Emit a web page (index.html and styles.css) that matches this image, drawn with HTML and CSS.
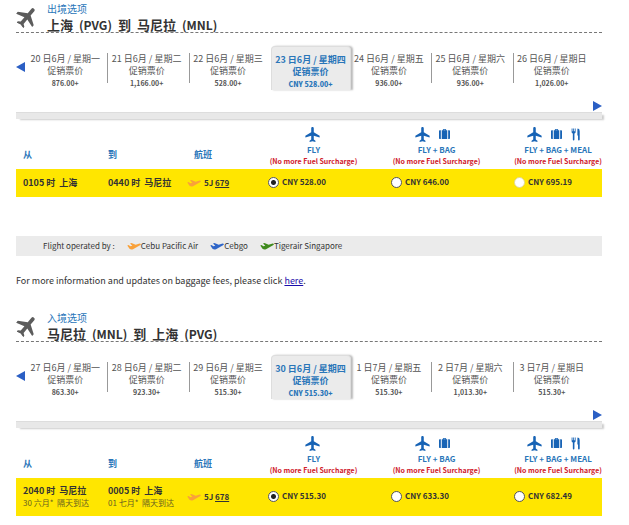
FILE: index.html
```html
<!DOCTYPE html>
<html lang="zh-CN">
<head>
    <meta charset="UTF-8">
    <meta name="viewport" content="width=device-width, initial-scale=1.0">
    <title>Select Flights</title>
    <link rel="stylesheet" href="styles.css">
</head>
<body>
    <!-- shared icons -->
    <svg class="sprite" width="0" height="0" aria-hidden="true">
        <symbol id="plane" viewBox="2 2 19 20">
            <path d="M21 16v-2.200l-7.800-4.900V3.700c0-1-0.770-1.700-1.700-1.700S9.800 2.700 9.800 3.700v5.200L2 13.800V16l7.800-2.400V18.800l-2.200 1.600V22l3.900-1.100 3.900 1.100v-1.600l-2.200-1.600v-5.200z"/>
        </symbol>
        <symbol id="bag" viewBox="0 0 12 12">
            <path d="M0.800 2H2v9.500H0.800Q0 11.500 0 10.700V2.800Q0 2 0.800 2zM10 2h1.200Q12 2 12 2.800v7.900q0 0.800-0.800 0.800H10zM3 2h1.200V1.200Q4.200 0.500 5 0.500h2Q7.800 0.500 7.800 1.200V2H9v9.500H3zM5.100 1.300V2h1.800v-0.700z"/>
        </symbol>
        <symbol id="meal" viewBox="0 0 10 14">
            <path d="M0.300 0.500h0.900v3h0.800v-3h0.900v3h0.800v-3h0.900v4q0 1-1.300 1.500v6.500q0 1-0.850 1t-0.850-1V6Q0.300 5.500 0.300 4.500zM7 0.500q2 0.300 2 3V12.500q0 1-0.900 1t-0.900-1V8H6.500V1.500q0-0.900 0.500-1z"/>
        </symbol>
        <symbol id="takeoff" viewBox="0 0 14 8">
            <path d="M0.300 3.400l1.200-0.300 1.900 1.200 1.900-0.500L3 1.400l1.500-0.300 4.200 1.700 3.100-1.100q1.600-0.400 2 0.200t-0.800 1.300L9.500 5.300 6 7.300Q4 8 2.500 6.800L0.300 3.400z"/>
        </symbol>
    </svg>

    <main class="page">
        <section class="trip">
            <header class="trip-header">
                <svg class="trip-icon"><use href="#plane"/></svg>
                <div>
                    <p class="trip-type">出境选项</p>
                    <h2><span>上海</span><span class="code">(PVG)</span><span>到</span><span>马尼拉</span><span class="code">(MNL)</span></h2>
                </div>
            </header>

            <div class="dates">
                <button class="arrow prev" aria-label="Previous"></button>
                <a class="date" href="#">20 日6月 / 星期一<br>促销票价<b>876.00+</b></a>
                <a class="date" href="#">21 日6月 / 星期二<br>促销票价<b>1,166.00+</b></a>
                <a class="date" href="#">22 日6月 / 星期三<br>促销票价<b>528.00+</b></a>
                <a class="date selected" href="#">23 日6月 / 星期四<br>促销票价<b>CNY 528.00+</b></a>
                <a class="date" href="#">24 日6月 / 星期五<br>促销票价<b>936.00+</b></a>
                <a class="date" href="#">25 日6月 / 星期六<br>促销票价<b>936.00+</b></a>
                <a class="date" href="#">26 日6月 / 星期日<br>促销票价<b>1,026.00+</b></a>
            </div>
            <div class="next-row"><button class="arrow next" aria-label="Next"></button></div>
            <div class="bar"></div>

            <table class="flights">
                <thead>
                    <tr>
                        <th class="place">从</th>
                        <th class="place">到</th>
                        <th class="number">航班</th>
                        <th class="fare">
                            <div class="icons"><svg class="i-plane"><use href="#plane"/></svg></div>
                            FLY<small>(No more Fuel Surcharge)</small>
                        </th>
                        <th class="fare">
                            <div class="icons many"><svg class="i-plane"><use href="#plane"/></svg><svg class="i-bag"><use href="#bag"/></svg></div>
                            FLY + BAG<small>(No more Fuel Surcharge)</small>
                        </th>
                        <th class="fare last">
                            <div class="icons many"><svg class="i-plane"><use href="#plane"/></svg><svg class="i-bag"><use href="#bag"/></svg><svg class="i-meal"><use href="#meal"/></svg></div>
                            FLY + BAG + MEAL<small>(No more Fuel Surcharge)</small>
                        </th>
                    </tr>
                </thead>
                <tbody>
                    <tr>
                        <td><b>0105 时&nbsp; 上海</b></td>
                        <td><b>0440 时&nbsp; 马尼拉</b></td>
                        <td class="flight-no"><svg class="i-air cebu"><use href="#takeoff"/></svg><span>5J <a href="#">679</a></span></td>
                        <td class="price"><label><input type="radio" name="out" checked>CNY 528.00</label></td>
                        <td class="price"><label><input type="radio" name="out">CNY 646.00</label></td>
                        <td class="price"><label><input type="radio" name="out" class="light">CNY 695.19</label></td>
                    </tr>
                </tbody>
            </table>
        </section>

        <div class="operators">
            <span class="operators-label">Flight operated by :</span>
            <span class="operator"><svg class="i-air cebu"><use href="#takeoff"/></svg>Cebu Pacific Air</span>
            <span class="operator"><svg class="i-air cebgo"><use href="#takeoff"/></svg>Cebgo</span>
            <span class="operator"><svg class="i-air tiger"><use href="#takeoff"/></svg>Tigerair Singapore</span>
        </div>

        <p class="info">For more information and updates on baggage fees, please click <a href="#">here</a>.</p>

        <section class="trip">
            <header class="trip-header">
                <svg class="trip-icon"><use href="#plane"/></svg>
                <div>
                    <p class="trip-type">入境选项</p>
                    <h2><span>马尼拉</span><span class="code">(MNL)</span><span>到</span><span>上海</span><span class="code">(PVG)</span></h2>
                </div>
            </header>

            <div class="dates">
                <button class="arrow prev" aria-label="Previous"></button>
                <a class="date" href="#">27 日6月 / 星期一<br>促销票价<b>863.30+</b></a>
                <a class="date" href="#">28 日6月 / 星期二<br>促销票价<b>923.30+</b></a>
                <a class="date" href="#">29 日6月 / 星期三<br>促销票价<b>515.30+</b></a>
                <a class="date selected" href="#">30 日6月 / 星期四<br>促销票价<b>CNY 515.30+</b></a>
                <a class="date" href="#">1 日7月 / 星期五<br>促销票价<b>515.30+</b></a>
                <a class="date" href="#">2 日7月 / 星期六<br>促销票价<b>1,013.30+</b></a>
                <a class="date" href="#">3 日7月 / 星期日<br>促销票价<b>515.30+</b></a>
            </div>
            <div class="next-row"><button class="arrow next" aria-label="Next"></button></div>
            <div class="bar"></div>

            <table class="flights">
                <thead>
                    <tr>
                        <th class="place">从</th>
                        <th class="place">到</th>
                        <th class="number">航班</th>
                        <th class="fare">
                            <div class="icons"><svg class="i-plane"><use href="#plane"/></svg></div>
                            FLY<small>(No more Fuel Surcharge)</small>
                        </th>
                        <th class="fare">
                            <div class="icons many"><svg class="i-plane"><use href="#plane"/></svg><svg class="i-bag"><use href="#bag"/></svg></div>
                            FLY + BAG<small>(No more Fuel Surcharge)</small>
                        </th>
                        <th class="fare last">
                            <div class="icons many"><svg class="i-plane"><use href="#plane"/></svg><svg class="i-bag"><use href="#bag"/></svg><svg class="i-meal"><use href="#meal"/></svg></div>
                            FLY + BAG + MEAL<small>(No more Fuel Surcharge)</small>
                        </th>
                    </tr>
                </thead>
                <tbody>
                    <tr>
                        <td><b>2040 时&nbsp; 马尼拉</b><span class="arrival">30 六月*&nbsp; 隔天到达</span></td>
                        <td><b>0005 时&nbsp; 上海</b><span class="arrival">01 七月*&nbsp; 隔天到达</span></td>
                        <td class="flight-no"><svg class="i-air cebu"><use href="#takeoff"/></svg><span>5J <a href="#">678</a></span></td>
                        <td class="price"><label><input type="radio" name="in" checked>CNY 515.30</label></td>
                        <td class="price"><label><input type="radio" name="in">CNY 633.30</label></td>
                        <td class="price"><label><input type="radio" name="in">CNY 682.49</label></td>
                    </tr>
                </tbody>
            </table>
        </section>
    </main>
</body>
</html>
```

FILE: styles.css
```css
* {
    box-sizing: border-box;
}
body {
    margin: 0;
    background-color: #fff;
    color: #333;
    font-family: "Noto Sans CJK SC", "Noto Sans", sans-serif;
    font-size: 9px;
    line-height: 12px;
}
.sprite {
    position: absolute;
}
svg {
    display: block;
    flex: none;
    fill: currentColor;
}
.page {
    padding: 3px 27px 0 16px;
}

/* heading */
.trip-header {
    display: flex;
    gap: 9px;
    height: 30px;
    border-bottom: 1px dashed #777;
}
.trip-icon {
    width: 22px;
    height: 22px;
    margin-top: 3px;
    color: #5c5c5c;
    transform: rotate(40deg);
}
.trip-type {
    margin: 0;
    color: #2a76b9;
    font-size: 10px;
}
h2 {
    display: flex;
    gap: 6px;
    margin: 2px 0 0;
    font-size: 13px;
    line-height: 16px;
}
.code {
    font-size: 12px;
}

/* date strip */
.dates {
    display: flex;
    margin: 13px 7px 0 0;
}
.arrow {
    width: 9px;
    height: 10px;
    padding: 0;
    border: 0;
    background-color: #2b5fc4;
    cursor: pointer;
}
.prev {
    margin: 16px 2px 0 0;
    clip-path: polygon(0 50%, 100% 0, 100% 100%);
}
.next {
    clip-path: polygon(0 0, 100% 50%, 0 100%);
}
.date {
    flex: 1 1 0;
    height: 30px;
    margin-top: 7px;
    padding-right: 4px;
    border-right: 1px solid #999;
    color: #555;
    text-align: center;
    text-decoration: none;
    white-space: nowrap;
}
.date:last-child,
.date:has(+ .selected) {
    border-right-color: transparent;
}
.date b {
    display: block;
    font-size: 7px;
}
.date.selected {
    height: 44px;
    margin-top: 0;
    padding: 7px 1px 0 0;
    border: 1px solid #ddd;
    border-bottom: 0;
    border-radius: 4px 4px 0 0;
    background-color: #ebebeb;
    box-shadow: 2px 0 2px #bbb;
    color: #2a76b9;
    font-weight: bold;
}
.next-row {
    display: flex;
    justify-content: flex-end;
    padding-top: 11px;
}
.bar {
    height: 7px;
    margin-top: 1px;
    border-top: 1px solid #ddd;
    background-color: #e8e8e8;
    box-shadow: 3px 2px 2px -1px #ccc;
}

/* flights */
.flights {
    width: 100%;
    table-layout: fixed;
    border-collapse: collapse;
}
th {
    height: 50px;
    padding: 0 0 8px 7px;
    color: #2a76b9;
    text-align: left;
    vertical-align: bottom;
}
.place {
    width: 14.5%;
}
.number {
    width: 14%;
    padding-left: 8px;
}
.fare {
    width: 21%;
    padding: 0 32px 3px 0;
    font-size: 8px;
    text-align: center;
    white-space: nowrap;
}
.fare.last {
    width: 15%;
    padding-right: 0;
}
.fare small {
    display: block;
    color: #d0202b;
    font-size: 7px;
    line-height: 10px;
}
.icons {
    display: flex;
    justify-content: center;
    align-items: center;
    gap: 9px;
    height: 16px;
    margin-bottom: 2px;
    padding-right: 2px;
    color: #1763b5;
}
.icons.many {
    padding-right: 8px;
}
.i-plane {
    width: 15px;
    height: 15px;
}
.i-bag {
    width: 11px;
    height: 12px;
}
.i-meal {
    width: 10px;
    height: 13px;
}
.i-air {
    width: 14px;
    height: 8px;
}
.cebu {
    color: #f9a13a;
}
.cebgo {
    color: #2f66c8;
}
.tiger {
    color: #3f8a1d;
}
td {
    height: 28px;
    padding: 7px 0 7px 7px;
    background-color: #ffe600;
    white-space: nowrap;
}
td b {
    display: block;
}
.arrival {
    color: #665f20;
    font-size: 8px;
}
.flight-no {
    padding-left: 1px;
    font-size: 8px;
    font-weight: bold;
}
.flight-no svg,
.flight-no span {
    display: inline-block;
    margin-right: 3px;
    vertical-align: middle;
}
.flight-no a {
    color: inherit;
}
.price {
    padding: 6px 0 8px;
    font-size: 8px;
    font-weight: bold;
}
.price label {
    display: flex;
    align-items: center;
    gap: 3px;
}
input[type="radio"] {
    appearance: none;
    width: 11px;
    height: 11px;
    margin: 0;
    border: 1px solid #555;
    border-radius: 50%;
    background-color: #fff;
}
input[type="radio"]:checked {
    background-image: radial-gradient(circle, #222 2px, #fff 3px);
}
input.light {
    border-color: #e0d890;
}

/* operators */
.operators {
    display: flex;
    align-items: center;
    gap: 12px;
    margin-top: 39px;
    padding: 4px 27px;
    background-color: #ebebeb;
    font-size: 8px;
}
.operator {
    display: flex;
    align-items: center;
}
.info {
    margin: 19px 0 25px;
}
.info a {
    color: #1a0dab;
}
```
